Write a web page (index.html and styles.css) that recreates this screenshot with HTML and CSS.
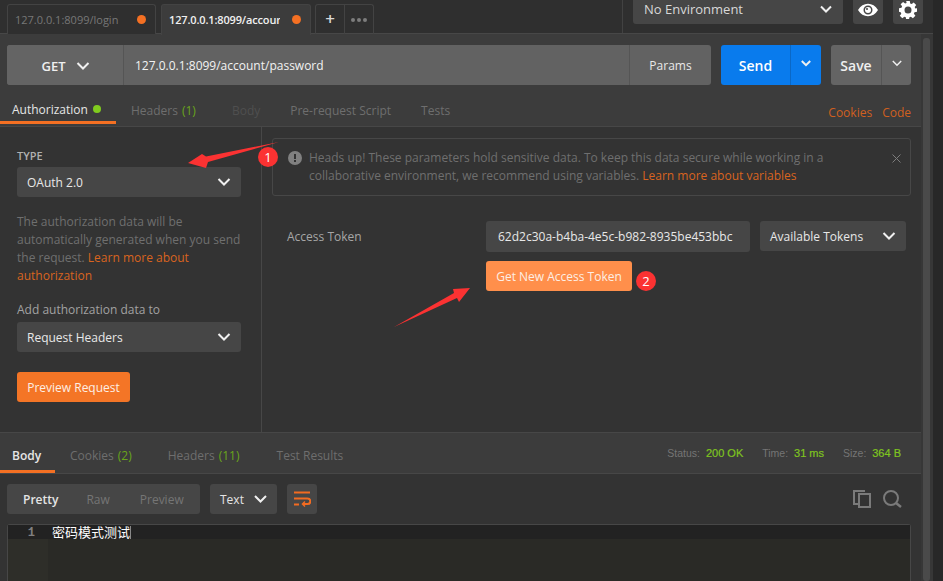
FILE: index.html
```html
<!DOCTYPE html>
<html lang="en">
<head>
<meta charset="utf-8">
<title>Postman</title>
<link rel="stylesheet" href="styles.css">
</head>
<body>
<div class="app">
  <div class="main">
    <header class="topbar">
      <div class="tabs">
        <div class="tab"><span class="tab-text">127.0.0.1:8099/login</span><i class="dot"></i></div>
        <div class="tab active"><span class="tab-text">127.0.0.1:8099/account/password</span><i class="dot"></i></div>
        <div class="tab-tools">
          <span class="tool plus">+</span>
          <span class="tool more"><i></i><i></i><i></i></span>
        </div>
      </div>
      <div class="env">
        <div class="env-select"><span>No Environment</span>
          <svg class="chev" width="12" height="8" viewBox="0 0 12 8"><path d="M1 1.500l5 5 5-5"/></svg>
        </div>
        <div class="icon-btn">
          <svg width="20" height="14" viewBox="0 0 20 14"><path fill="#fff" fill-rule="evenodd" d="M0 7C2.500 2.800 6 .8 10 .8S17.500 2.800 20 7c-2.500 4.200-6 6.200-10 6.200S2.500 11.200 0 7zm10-4.500a4.500 4.500 0 100 9 4.500 4.500 0 000-9z"/><circle cx="10" cy="7" r="3" fill="#fff"/><circle cx="9" cy="6" r="1" fill="#444"/></svg>
        </div>
        <div class="icon-btn">
          <svg width="18" height="18" viewBox="0 0 18 18"><path fill="#fff" fill-rule="evenodd" d="M7.200 0h3.600l.4 2.500 1.500.6 2-1.500 2.500 2.500-1.500 2 .6 1.500L18 7.200v3.600l-2.500.4-.6 1.500 1.500 2-2.500 2.500-2-1.500-1.500.6-.4 2.500H7.200l-.4-2.500-1.500-.6-2 1.500L.8 14.700l1.500-2-.6-1.500L0 10.800V7.200l2.500-.4.600-1.500-1.500-2L4.100 1.100l2 1.500 1.500-.6zM9 5.500a3.500 3.500 0 100 7 3.500 3.500 0 000-7z"/></svg>
        </div>
      </div>
    </header>

    <div class="work">
      <div class="content">
        <section class="request">
          <div class="urlbar">
            <div class="url-group">
              <div class="method"><span>GET</span>
                <svg class="chev" width="14" height="8" viewBox="0 0 14 8"><path d="M1.500 1l5.500 5.500L12.500 1"/></svg>
              </div>
              <div class="url">127.0.0.1:8099/account/password</div>
              <div class="params">Params</div>
            </div>
            <div class="split send"><span class="split-main">Send</span><span class="split-side"><svg class="chev" width="10" height="7" viewBox="0 0 10 7"><path d="M.8 1l4.200 4.200L9.200 1"/></svg></span></div>
            <div class="split save"><span class="split-main">Save</span><span class="split-side"><svg class="chev thin" width="10" height="7" viewBox="0 0 10 7"><path d="M.8 1l4.200 4.200L9.200 1"/></svg></span></div>
          </div>
          <nav class="req-tabs">
            <span class="rt rt-active">Authorization<i class="green-dot"></i></span>
            <span class="rt rt-headers">Headers <b>(1)</b></span>
            <span class="rt rt-off">Body</span>
            <span class="rt">Pre-request Script</span>
            <span class="rt">Tests</span>
            <span class="rt-links"><a>Cookies</a><a>Code</a></span>
          </nav>
        </section>

        <section class="auth">
          <aside class="auth-left">
            <div class="label-type">TYPE</div>
            <div class="select"><span>OAuth 2.0</span><svg class="chev" width="14" height="8" viewBox="0 0 14 8"><path d="M1.500 1l5.500 5.500L12.500 1"/></svg></div>
            <p class="help">The authorization data will be automatically generated when you send the request. <a>Learn more about authorization</a></p>
            <div class="label-add">Add authorization data to</div>
            <div class="select"><span>Request Headers</span><svg class="chev" width="14" height="8" viewBox="0 0 14 8"><path d="M1.500 1l5.500 5.500L12.500 1"/></svg></div>
            <div class="btn-preview">Preview Request</div>
          </aside>
          <div class="auth-right">
            <div class="notice">
              <svg class="notice-icon" width="14" height="14" viewBox="0 0 14 14"><circle cx="7" cy="7" r="7" fill="#808080"/><rect x="6" y="3" width="2" height="5" fill="#333"/><rect x="6" y="9" width="2" height="2" fill="#333"/></svg>
              <p>Heads up! These parameters hold sensitive data. To keep this data secure while working in a collaborative environment, we recommend using variables. <a>Learn more about variables</a></p>
              <svg class="notice-x" width="9" height="9" viewBox="0 0 9 9"><path d="M.5.5l8 8M8.500.5l-8 8"/></svg>
            </div>
            <div class="token-row">
              <div class="token-label">Access Token</div>
              <div class="token-col">
                <div class="token-input">62d2c30a-b4ba-4e5c-b982-8935be453bbc</div>
                <div class="btn-token">Get New Access Token</div>
              </div>
              <div class="select tokens"><span>Available Tokens</span><svg class="chev" width="14" height="8" viewBox="0 0 14 8"><path d="M1.500 1l5.500 5.500L12.500 1"/></svg></div>
            </div>
          </div>
        </section>

        <section class="response">
          <nav class="res-tabs">
            <span class="rs rs-active">Body</span>
            <span class="rs rs-cookies">Cookies <b>(2)</b></span>
            <span class="rs rs-headers">Headers <b>(11)</b></span>
            <span class="rs rs-tests">Test Results</span>
            <span class="stats">
              <span>Status: <b>200 OK</b></span>
              <span>Time: <b>31 ms</b></span>
              <span>Size: <b>364 B</b></span>
            </span>
          </nav>
          <div class="res-tools">
            <div class="seg"><span class="seg-on">Pretty</span><span>Raw</span><span>Preview</span></div>
            <div class="fmt"><span>Text</span><svg class="chev" width="13" height="8" viewBox="0 0 13 8"><path d="M1 1l5.500 5.500L12 1"/></svg></div>
            <div class="wrap">
              <svg width="18" height="16" viewBox="0 0 18 16" fill="none" stroke="#f26b21" stroke-width="2"><path d="M1 1.500h16M1 7.500h13.500a2.800 2.800 0 010 5.600H10M1 13.500h5"/><path d="M12 10.500L9.500 13l2.500 2.500" stroke-width="1.500"/></svg>
            </div>
            <div class="res-icons">
              <svg width="18" height="18" viewBox="0 0 18 18" fill="none" stroke="#7a7a7a" stroke-width="2"><path d="M12 1H1v13h4"/><rect x="6" y="4" width="11" height="13"/></svg>
              <svg width="19" height="18" viewBox="0 0 19 18" fill="none" stroke="#7a7a7a" stroke-width="2"><circle cx="8" cy="8" r="7"/><path d="M13 13l5 4" stroke-width="2.500"/></svg>
            </div>
          </div>
          <div class="code">
            <div class="code-line"><span class="ln">1</span><span class="code-text">密码模式测试</span></div>
            <div class="code-rest"><span class="gutter"></span></div>
          </div>
        </section>
      </div>
      <div class="scrollbar"><i></i></div>
    </div>
  </div>
  <div class="edge"></div>
</div>

<svg class="marks" width="943" height="581" viewBox="0 0 943 581">
  <path fill="#fb3232" d="M188 163L202 154L206 156.500L279 142L208 162L206 168Z"/>
  <circle cx="268" cy="157" r="10" fill="#fb3232"/>
  <path fill="#fb3232" d="M394 327L454 293L453 289L470 288L459 302L457 298Z"/>
  <circle cx="646" cy="281" r="10" fill="#fb3232"/>
  <text x="268" y="162" class="mark-num">1</text>
  <text x="646" y="286" class="mark-num">2</text>
</svg>
</body>
</html>
```

FILE: styles.css
```css
* { box-sizing: border-box; }
html, body { margin: 0; padding: 0; height: 100%; overflow: hidden; }
body { background: #262626; font-family: "Open Sans", "Noto Sans", sans-serif; font-size: 12px; color: #d8d8d8; position: relative; }
a { color: #d9641f; }
p { margin: 0; }
i { font-style: normal; display: block; }

.app { display: flex; width: 943px; height: 581px; }
.main { width: 933px; display: flex; flex-direction: column; }
.edge { width: 10px; background: #282828; }

.chev { fill: none; stroke: #f0f0f0; stroke-width: 2; flex: none; }
.chev.thin { stroke-width: 1.500; }

/* top bar */
.topbar { height: 34px; flex: none; display: flex; background: #2f2f2f; border-bottom: 1px solid #474747; }
.tabs { width: 623px; flex: none; display: flex; padding: 4px 0 0 7px; border-right: 1px solid #424242; gap: 5px; }
.tab { width: 149px; height: 30px; display: flex; align-items: center; justify-content: space-between; padding: 0 9px 0 7px; background: #2f2f2f; border: 1px solid #434343; border-bottom: 0; border-radius: 3px 3px 0 0; color: #777; font-size: 11px; }
.tab.active { width: 150px; height: 31px; background: #3c3c3c; color: #f0f0f0; font-weight: 600; z-index: 1; padding-bottom: 1px; }
.tab-text { width: 111px; overflow: hidden; white-space: nowrap; }
.active .tab-text { letter-spacing: -.15px; }
.dot { width: 9px; height: 9px; border-radius: 50%; background: #f47023; flex: none; }
.tab-tools { display: flex; height: 30px; margin-left: -1px; border: 1px solid #434343; border-bottom: 0; border-radius: 3px 3px 0 0; }
.tool { width: 29px; display: flex; align-items: center; justify-content: center; gap: 2px; }
.plus { color: #d8d8d8; font-size: 17px; font-weight: 600; border-right: 1px solid #434343; padding-bottom: 2px; }
.more { width: 28px; }
.more i { width: 4px; height: 4px; border-radius: 50%; background: #7d7d7d; }
.env { display: flex; gap: 10px; padding-left: 10px; align-items: flex-start; }
.env-select { width: 210px; height: 24px; background: #464646; border-radius: 0 0 3px 3px; display: flex; align-items: center; justify-content: space-between; padding: 0 11px 6px; color: #d8d8d8; font-size: 13px; line-height: 18px; }
.icon-btn { width: 30px; height: 24px; background: #464646; border-radius: 0 0 3px 3px; display: flex; align-items: center; justify-content: center; padding-bottom: 4px; }

.work { flex: 1; display: flex; min-height: 0; }
.content { width: 921px; flex: none; display: flex; flex-direction: column; }
.scrollbar { flex: 1; background: #373737; padding: 4px 3px 0 2px; }
.scrollbar i { height: 100%; background: #4a4a4a; border-radius: 3px; }

/* request */
.request { height: 93px; flex: none; background: #3c3c3c; border-bottom: 1px solid #474747; display: flex; flex-direction: column; padding-top: 11px; }
.urlbar { display: flex; height: 40px; padding-left: 7px; gap: 10px; }
.url-group { width: 704px; display: flex; background: #626262; border-radius: 3px; }
.method { width: 117px; display: flex; align-items: center; justify-content: center; gap: 10px; background: #646464; border-right: 1px solid #555; border-radius: 3px 0 0 3px; color: #f0f0f0; font-weight: 600; font-size: 13px; padding-left: 1px; padding-top: 2px; }
.url { flex: 1; display: flex; align-items: center; padding-left: 11px; color: #f2f2f2; font-size: 12px; }
.params { width: 82px; display: flex; align-items: center; justify-content: center; border-left: 1px solid #555; font-size: 12px; color: #e8e8e8; }
.split { display: flex; border-radius: 3px; color: #fff; font-weight: 600; font-size: 14px; }
.send { width: 100px; background: #097bed; }
.save { width: 80px; background: #646464; color: #f0f0f0; }
.split-main { flex: 1; display: flex; align-items: center; justify-content: center; padding-top: 1px; }
.split-side { width: 31px; display: flex; align-items: center; justify-content: center; padding-bottom: 4px; }
.send .split-side { border-left: 1px solid #0a68c6; }
.save .split-side { width: 30px; border-left: 1px solid #555; }
.req-tabs { flex: 1; display: flex; align-items: stretch; position: relative; font-size: 12px; }
.rt { display: flex; align-items: center; padding-top: 11px; height: 39px; color: #6e6e6e; white-space: nowrap; margin-left: 30px; }
.rt b { font-weight: 400; color: #6aa51b; margin-left: 4px; }
.rt-active { width: 116px; margin-left: 0; padding-top: 12px; padding-left: 12px; color: #e6e6e6; border-bottom: 3px solid #f47023; gap: 5px; }
.rt-headers { margin-left: 15px; }
.rt-off { color: #4f4f4f; margin-left: 36px; }
.rt-links { margin-left: auto; display: flex; gap: 10px; padding: 15px 10px 0 0; align-items: center; height: 39px; }
.rt-links a { color: #d0601f; }
.green-dot { width: 8px; height: 8px; border-radius: 50%; background: #80cb1e; }

/* auth */
.auth { height: 305px; flex: none; display: flex; background: #333; }
.auth-left { width: 262px; flex: none; padding: 23px 20px 0 17px; border-right: 1px solid #474747; }
.label-type { font-size: 11px; font-weight: 600; color: #b0b0b0; line-height: 12px; height: 12px; margin-bottom: 5px; }
.select { height: 30px; background: #464646; border-radius: 3px; display: flex; align-items: center; justify-content: space-between; padding: 0 10px; color: #e8e8e8; font-size: 12px; }
.help { margin-top: 16px; line-height: 18px; color: #6f6f6f; font-size: 12px; width: 224px; }
.label-add { margin-top: 17px; margin-bottom: 4px; color: #a2a2a2; line-height: 16px; font-size: 12px; }
.btn-preview { margin-top: 20px; width: 113px; height: 30px; background: #f47526; border-radius: 3px; color: #fdeee4; font-size: 12px; display: flex; align-items: center; justify-content: center; }
.auth-right { flex: 1; padding: 11px 10px 0; }
.notice { height: 58px; border: 1px solid #474747; border-radius: 3px; display: flex; padding: 10px 9px 0 15px; }
.notice-icon { flex: none; margin-top: 2px; margin-right: 7px; }
.notice p { line-height: 18px; color: #6f6f6f; width: 540px; font-size: 12px; }
.notice-x { margin-left: auto; margin-top: 5px; fill: none; stroke: #7d7d7d; stroke-width: 1; flex: none; }
.token-row { display: flex; margin-top: 25px; padding-left: 15px; }
.token-label { width: 199px; padding-top: 8px; color: #a6a6a6; line-height: 16px; font-size: 12px; }
.token-col { width: 264px; }
.token-input { height: 31px; background: #464646; border-radius: 3px; display: flex; align-items: center; padding-left: 12px; color: #e8e8e8; font-size: 12px; white-space: nowrap; }
.btn-token { margin-top: 9px; width: 146px; height: 30px; background: #ff8f4b; border-radius: 3px; color: #fdeee4; font-size: 12px; display: flex; align-items: center; justify-content: center; }
.select.tokens { width: 146px; margin-left: 10px; }

/* response */
.response { flex: 1; min-height: 0; display: flex; flex-direction: column; background: #333; }
.res-tabs { height: 42px; flex: none; background: #3c3c3c; border-top: 1px solid #474747; border-bottom: 1px solid #474747; display: flex; font-size: 12px; align-items: stretch; }
.rs { display: flex; align-items: center; color: #6e6e6e; padding-top: 4px; white-space: nowrap; }
.rs b { font-weight: 400; color: #6aa51b; margin-left: 4px; }
.rs-active { width: 55px; padding-left: 12px; color: #e6e6e6; font-weight: 600; border-bottom: 3px solid #f47023; padding-top: 7px; }
.rs-cookies { margin-left: 15px; }
.rs-headers { margin-left: 36px; }
.rs-tests { margin-left: 37px; }
.stats { margin-left: auto; display: flex; gap: 19px; align-items: center; padding: 0 20px 0 0; font-family: "Liberation Sans", Arial, sans-serif; font-size: 10.500px; color: #757575; }
.stats b { font-weight: 400; color: #7fc41f; margin-left: 3px; font-size: 11px; -webkit-text-stroke: .2px #7fc41f; }
.res-tools { height: 30px; flex: none; margin-top: 10px; padding-left: 7px; display: flex; gap: 10px; }
.seg { width: 193px; background: #464646; border-radius: 3px; display: flex; align-items: center; padding-left: 16px; gap: 30px; color: #757575; font-size: 12px; }
.seg-on { color: #e4e4e4; font-weight: 600; margin-right: -2px; }
.fmt { width: 67px; background: #464646; border-radius: 3px; display: flex; align-items: center; justify-content: space-between; padding: 0 10px; color: #e4e4e4; font-weight: 500; font-size: 12px; }
.wrap { width: 30px; background: #464646; border-radius: 3px; display: flex; align-items: center; justify-content: center; }
.res-icons { margin-left: auto; display: flex; gap: 12px; align-items: center; padding-right: 19px; }
.code { flex: 1; margin: 10px 10px 0 7px; border: 1px solid #474747; border-bottom: 0; border-radius: 3px 3px 0 0; background: #2a2a26; display: flex; flex-direction: column; }
.code-line { height: 14px; flex: none; display: flex; background: #222; font-family: "Noto Sans CJK SC", "Liberation Mono", monospace; color: #fff; font-size: 13px; line-height: 14px; }
.ln { width: 40px; flex: none; text-align: right; padding-right: 13px; color: #808080; font-size: 12px; font-weight: 600; line-height: 16px; font-family: "Liberation Mono", monospace; }
.code-text { padding-left: 4px; }
.code-text::after { content: ""; display: inline-block; width: 1px; height: 13px; background: #888; vertical-align: -2px; }
.code-rest { flex: 1; display: flex; }
.gutter { width: 40px; background: #2e2e29; }

/* annotations */
.marks { position: absolute; left: 0; top: 0; pointer-events: none; }
.mark-num { fill: #fff; font-family: "Open Sans", sans-serif; font-size: 13px; text-anchor: middle; }
```
